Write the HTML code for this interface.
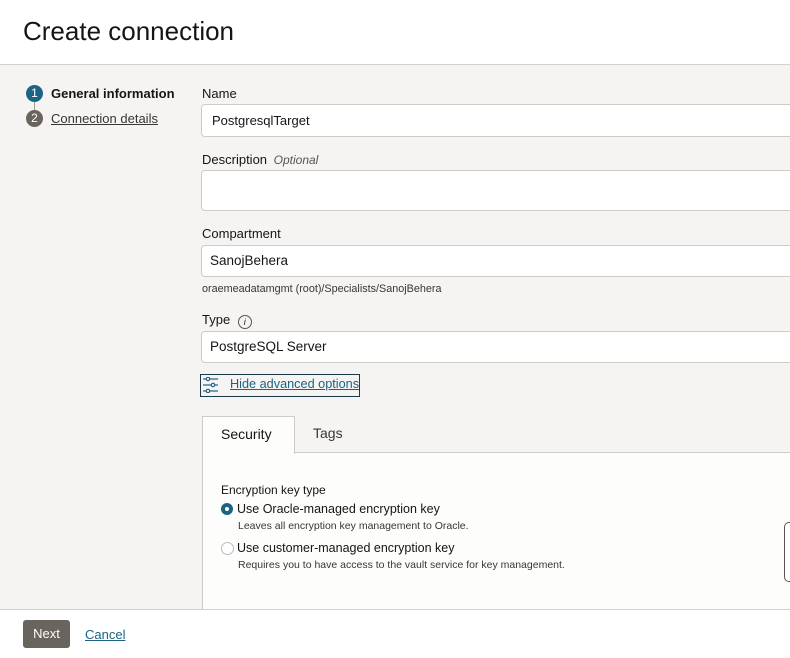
<html><head><style>
body{margin:0;width:790px;height:657px;overflow:hidden;background:#f5f4f2;font-family:"Liberation Sans",sans-serif;color:#161513;position:relative}
.a{position:absolute}
.hdr{left:0;top:0;width:790px;height:64px;background:#fff;border-bottom:1px solid #d3d1cd}
.hdr div{position:absolute;left:23px;top:16px;font-size:26px}
.lbl{font-size:13px;left:202px}
.inp{left:201px;width:600px;background:#fff;border:1px solid #cfccc7;border-radius:4px;box-sizing:border-box;font-size:13.5px;padding-left:10px}
.step{width:17px;height:17px;border-radius:50%;color:#fff;font-size:12px;text-align:center;line-height:17px}
</style></head><body>
<div class="a hdr"><div>Create connection</div></div>
<div class="a" style="left:34px;top:98px;width:1px;height:14px;background:#9e9a94"></div>
<div class="a step" style="left:26px;top:85px;background:#1c6485">1</div>
<div class="a step" style="left:26px;top:110px;background:#6a645e">2</div>
<div class="a" style="left:51px;top:86px;font-size:13px;font-weight:bold">General information</div>
<div class="a" style="left:51px;top:111px;font-size:13px;text-decoration:underline;color:#3a3631">Connection details</div>
<div class="a lbl" style="top:86px">Name</div>
<div class="a inp" style="top:104px;height:33px;line-height:31px;font-size:13px">PostgresqlTarget</div>
<div class="a lbl" style="top:152px">Description <i style="color:#555;font-size:12px;margin-left:3px">Optional</i></div>
<div class="a inp" style="top:170px;height:41px"></div>
<div class="a lbl" style="top:226px">Compartment</div>
<div class="a inp" style="top:245px;height:32px;line-height:30px;padding-left:8px">SanojBehera</div>
<div class="a" style="left:202px;top:283px;font-size:10.8px;color:#3a3631">oraemeadatamgmt (root)/Specialists/SanojBehera</div>
<div class="a lbl" style="top:312px">Type <span style="display:inline-block;width:12px;height:12px;border:1px solid #555;border-radius:50%;font-size:9px;text-align:center;line-height:12px;font-style:italic;margin-left:4px;vertical-align:-1px">i</span></div>
<div class="a inp" style="top:331px;height:32px;line-height:30px;padding-left:8px">PostgreSQL Server</div>
<div class="a" style="left:200px;top:374px;width:158px;height:21px;border:1px solid #1a3a4a"></div>
<svg class="a" style="left:203px;top:377px" width="16" height="16" viewBox="0 0 16 16" fill="none" stroke="#1c6485" stroke-width="1.2"><line x1="0" y1="2" x2="3" y2="2"/><circle cx="5" cy="2" r="1.7"/><line x1="7" y1="2" x2="15" y2="2"/><line x1="0" y1="8" x2="8" y2="8"/><circle cx="10" cy="8" r="1.7"/><line x1="12" y1="8" x2="15" y2="8"/><line x1="0" y1="14" x2="3" y2="14"/><circle cx="5" cy="14" r="1.7"/><line x1="7" y1="14" x2="15" y2="14"/></svg>
<div class="a" style="left:230px;top:377px;font-size:12.7px;color:#1c6485;text-decoration:underline">Hide advanced options</div>
<div class="a" style="left:202px;top:452px;width:600px;height:160px;background:#fdfdfc;border-left:1px solid #cfccc7;border-top:1px solid #cfccc7"></div>
<div class="a" style="left:202px;top:416px;width:91px;height:37px;background:#fdfdfc;border:1px solid #cfccc7;border-bottom:none"></div>
<div class="a" style="left:221px;top:426px;font-size:14px">Security</div>
<div class="a" style="left:313px;top:425px;font-size:14px;color:#3a3631">Tags</div>
<div class="a" style="left:221px;top:483px;font-size:12px">Encryption key type</div>
<div class="a" style="left:221px;top:503px;width:12px;height:12px;border-radius:50%;background:#1c6485"><div style="margin:4px;width:4px;height:4px;border-radius:50%;background:#fff"></div></div>
<div class="a" style="left:237px;top:502px;font-size:12.5px">Use Oracle-managed encryption key</div>
<div class="a" style="left:238px;top:520px;font-size:10.5px;color:#3a3631">Leaves all encryption key management to Oracle.</div>
<div class="a" style="left:221px;top:542px;width:11px;height:11px;border-radius:50%;border:1px solid #bbb;background:#fff"></div>
<div class="a" style="left:237px;top:541px;font-size:12.5px">Use customer-managed encryption key</div>
<div class="a" style="left:238px;top:559px;font-size:10.5px;color:#3a3631">Requires you to have access to the vault service for key management.</div>
<div class="a" style="left:784px;top:522px;width:10px;height:58px;border:1px solid #555;border-radius:5px;background:#fff"></div>
<div class="a" style="left:0;top:609px;width:790px;height:48px;background:#fff;border-top:1px solid #d3d1cd"></div>
<div class="a" style="left:23px;top:620px;width:47px;height:28px;background:#6a645e;border-radius:3px;color:#fff;font-size:13px;text-align:center;line-height:28px">Next</div>
<div class="a" style="left:85px;top:627px;font-size:13px;color:#1c6485;text-decoration:underline">Cancel</div>
</body></html>
